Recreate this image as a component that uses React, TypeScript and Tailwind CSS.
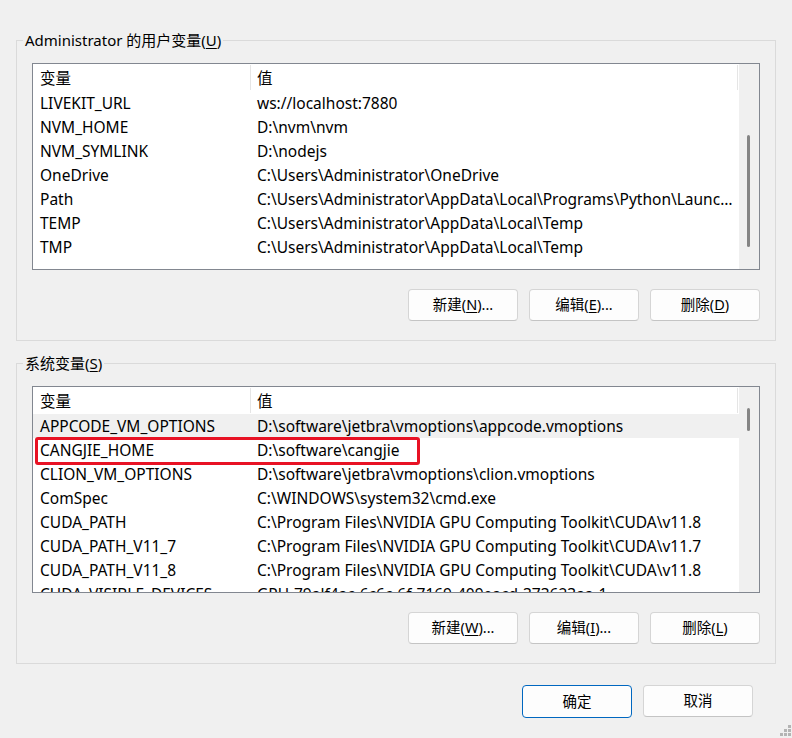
import React from "react";

const userVars: [string, string][] = [
  ["LIVEKIT_URL", "ws://localhost:7880"],
  ["NVM_HOME", "D:\\nvm\\nvm"],
  ["NVM_SYMLINK", "D:\\nodejs"],
  ["OneDrive", "C:\\Users\\Administrator\\OneDrive"],
  ["Path", "C:\\Users\\Administrator\\AppData\\Local\\Programs\\Python\\Launcher\\;C:\\Users\\Administrator"],
  ["TEMP", "C:\\Users\\Administrator\\AppData\\Local\\Temp"],
  ["TMP", "C:\\Users\\Administrator\\AppData\\Local\\Temp"],
];

const systemVars: [string, string][] = [
  ["APPCODE_VM_OPTIONS", "D:\\software\\jetbra\\vmoptions\\appcode.vmoptions"],
  ["CANGJIE_HOME", "D:\\software\\cangjie"],
  ["CLION_VM_OPTIONS", "D:\\software\\jetbra\\vmoptions\\clion.vmoptions"],
  ["ComSpec", "C:\\WINDOWS\\system32\\cmd.exe"],
  ["CUDA_PATH", "C:\\Program Files\\NVIDIA GPU Computing Toolkit\\CUDA\\v11.8"],
  ["CUDA_PATH_V11_7", "C:\\Program Files\\NVIDIA GPU Computing Toolkit\\CUDA\\v11.7"],
  ["CUDA_PATH_V11_8", "C:\\Program Files\\NVIDIA GPU Computing Toolkit\\CUDA\\v11.8"],
  ["CUDA_VISIBLE_DEVICES", "GPU-79alf4ac-6c6c-6f-7169-409eacd-373623aa-1"],
];

function Key({ label, k, after = "" }: { label: string; k: string; after?: string }) {
  return (
    <>
      {label}(<span className="underline underline-offset-2">{k}</span>){after}
    </>
  );
}

function Btn({ children, primary = false }: { children: React.ReactNode; primary?: boolean }) {
  return (
    <button
      className={`h-[32px] w-[110px] shrink-0 rounded-[4px] border bg-[#fdfdfd] text-[14.5px] text-black ${
        primary ? "h-[33px] border-[#0067c0]" : "border-[#d5d5d5] border-b-[#c4c4c4]"
      }`}
    >
      {children}
    </button>
  );
}

function VarList({
  rows,
  selected = -1,
  thumbTop,
  thumbHeight,
  marked = -1,
}: {
  rows: [string, string][];
  selected?: number;
  thumbTop: number;
  thumbHeight: number;
  marked?: number;
}) {
  return (
    <div className="flex h-[207px] border border-[#828790] bg-white">
      <div className="relative flex min-w-0 flex-1 flex-col overflow-hidden">
        {/* header */}
        <div className="flex h-[27px] shrink-0 items-stretch">
          <div className="flex w-[217px] items-center pl-[7px] pt-[2px]">变量</div>
          <div className="my-[1px] w-px bg-[#e5e5e5]" />
          <div className="flex flex-1 items-center pl-[6px] pt-[2px]">值</div>
          <div className="my-[1px] w-px bg-[#e5e5e5]" />
          <div className="w-[1px]" />
        </div>
        {rows.map(([name, value], i) => (
          <div
            key={name}
            className={`flex h-6 shrink-0 items-center pt-[2px] ${i === selected ? "bg-[#f0f0f0]" : ""}`}
          >
            <div className="w-[217px] shrink-0 truncate pl-[7px]">{name}</div>
            <div className="min-w-0 flex-1 truncate pl-[7px] pr-[6px]">{value}</div>
          </div>
        ))}
        {marked >= 0 && (
          <div
            className="pointer-events-none absolute left-[2px] h-[28px] w-[385px] rounded-[3px] border-[3px] border-[#e81224]"
            style={{ top: 27 + marked * 24 - 1 }}
          />
        )}
      </div>
      {/* scrollbar */}
      <div className="flex w-[20px] shrink-0 flex-col bg-[#f0f0f0]">
        <div
          className="ml-[8px] w-[3px] rounded-full bg-[#858585]"
          style={{ marginTop: thumbTop, height: thumbHeight }}
        />
      </div>
    </div>
  );
}

function Group({
  legend,
  children,
  className = "",
}: {
  legend: React.ReactNode;
  children: React.ReactNode;
  className?: string;
}) {
  return (
    <fieldset className={`min-w-0 border border-[#dadada] ${className}`}>
      <legend className="ml-[6px] px-[2px] text-[15px] leading-[18px]">{legend}</legend>
      <div className="px-[15px] pt-[14px] pb-[19px]">{children}</div>
    </fieldset>
  );
}

export default function App() {
  return (
    <div
      className="relative h-[738px] w-[792px] overflow-hidden bg-[#f0f0f0] px-[16px] pt-[31px] text-[15.5px] text-black"
      style={{ fontFamily: '"Noto Sans", "Noto Sans CJK SC", sans-serif' }}
    >
      <Group legend={<Key label="Administrator 的用户变量" k="U" />}>
        <VarList rows={userVars} thumbTop={71} thumbHeight={112} />
        <div className="mt-[19px] flex justify-end gap-[11px]">
          <Btn>
            <Key label="新建" k="N" after="..." />
          </Btn>
          <Btn>
            <Key label="编辑" k="E" after="..." />
          </Btn>
          <Btn>
            <Key label="删除" k="D" />
          </Btn>
        </div>
      </Group>

      <Group legend={<Key label="系统变量" k="S" />} className="mt-[13px]">
        <VarList rows={systemVars} selected={0} thumbTop={21} thumbHeight={23} marked={1} />
        <div className="mt-[19px] flex justify-end gap-[11px]">
          <Btn>
            <Key label="新建" k="W" after="..." />
          </Btn>
          <Btn>
            <Key label="编辑" k="I" after="..." />
          </Btn>
          <Btn>
            <Key label="删除" k="L" />
          </Btn>
        </div>
      </Group>

      <div className="mr-[23px] mt-[21px] flex justify-end gap-[11px]">
        <Btn primary>确定</Btn>
        <Btn>取消</Btn>
      </div>

      {/* resize grip */}
      <svg className="absolute bottom-0 right-0" width="14" height="14" viewBox="0 0 14 14">
        {[
          [10, 1],
          [6, 5],
          [10, 5],
          [2, 9],
          [6, 9],
          [10, 9],
        ].map(([x, y]) => (
          <rect key={`${x}-${y}`} x={x} y={y} width="3" height="3" fill="#b4b4b4" />
        ))}
      </svg>
    </div>
  );
}
